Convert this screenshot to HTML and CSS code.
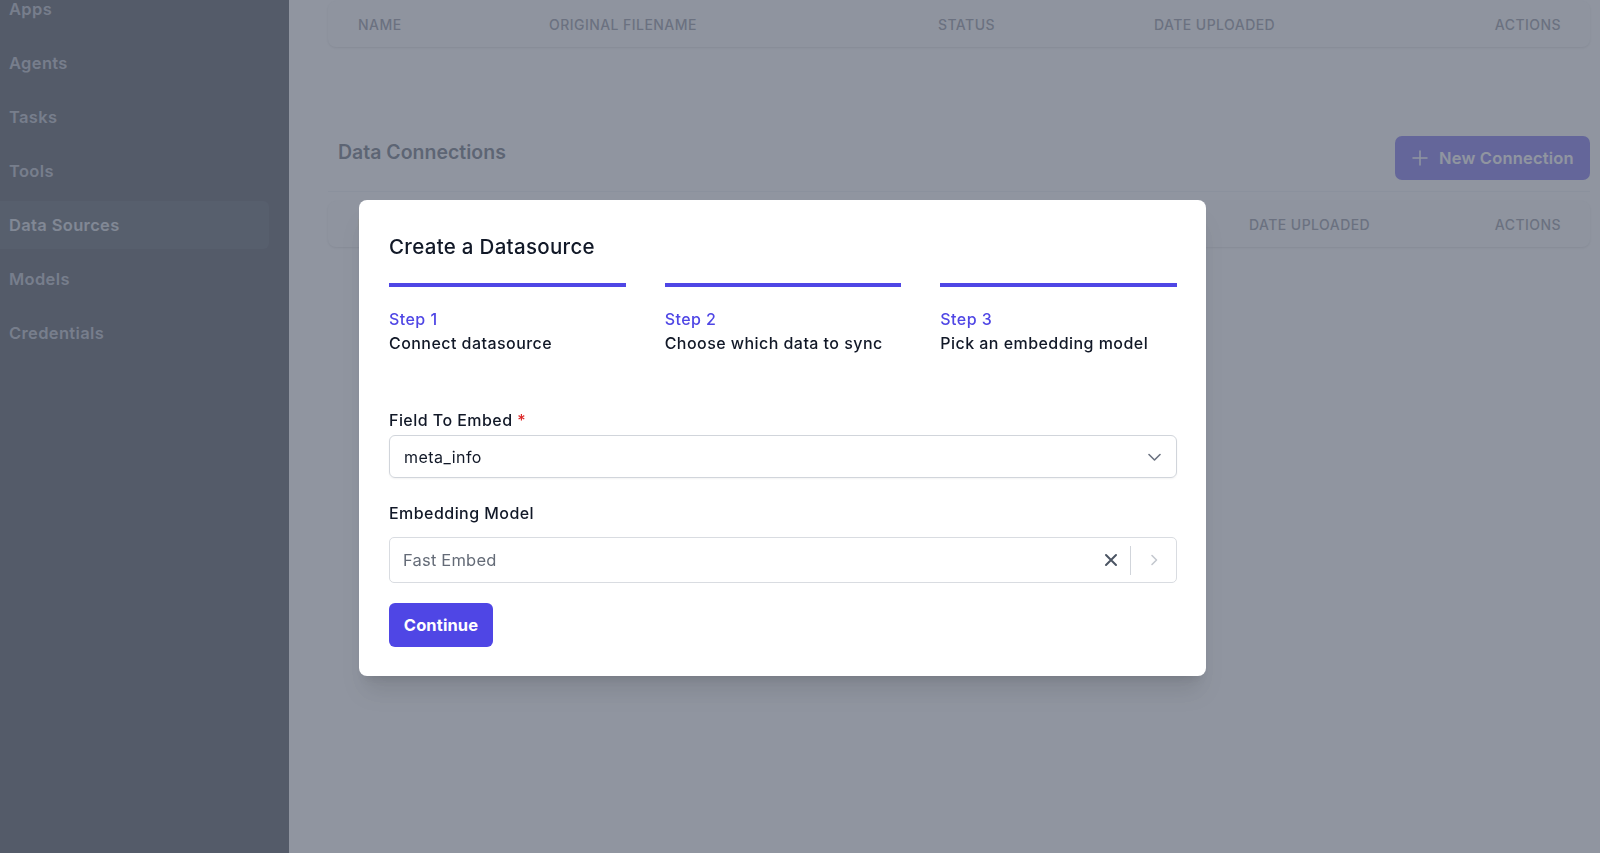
FILE: index.html
```html
<!DOCTYPE html>
<html lang="en">
<head>
	<meta charset="UTF-8">
	<meta name="viewport" content="width=device-width, initial-scale=1.0">
	<title>Data Sources</title>
	<link rel="stylesheet" href="styles.css">
</head>
<body>
	<div class="layout">
		<aside class="sidebar">
			<ul class="nav">
				<li>Apps</li>
				<li>Agents</li>
				<li>Tasks</li>
				<li>Tools</li>
				<li class="active">Data Sources</li>
				<li>Models</li>
				<li>Credentials</li>
			</ul>
		</aside>

		<main class="main">
			<div class="card">
				<div class="thead files">
					<span>Name</span>
					<span>Original Filename</span>
					<span>Status</span>
					<span>Date Uploaded</span>
					<span>Actions</span>
				</div>
			</div>

			<div class="section-head">
				<h2>Data Connections</h2>
				<button type="button" class="btn-new">
					<svg width="16" height="16" viewBox="0 0 16 16" fill="none" stroke="currentColor" stroke-width="1.5" stroke-linecap="round"><path d="M8 1v14M1 8h14"/></svg>
					New Connection
				</button>
			</div>

			<div class="card">
				<div class="thead conns">
					<span>Name</span>
					<span>Source</span>
					<span>Status</span>
					<span>Date Uploaded</span>
					<span>Actions</span>
				</div>
			</div>
		</main>
	</div>

	<div class="backdrop"></div>

	<div class="modal">
		<h3 class="modal-title">Create a Datasource</h3>

		<ol class="steps">
			<li>
				<span class="step-no">Step 1</span>
				<span class="step-name">Connect datasource</span>
			</li>
			<li>
				<span class="step-no">Step 2</span>
				<span class="step-name">Choose which data to sync</span>
			</li>
			<li>
				<span class="step-no">Step 3</span>
				<span class="step-name">Pick an embedding model</span>
			</li>
		</ol>

		<label class="label">Field To Embed <span class="req">*</span></label>
		<div class="select">
			<span>meta_info</span>
			<svg width="13" height="8" viewBox="0 0 13 8" fill="none" stroke="#6b7280" stroke-width="1.6" stroke-linecap="round" stroke-linejoin="round"><path d="M1 1.5l5.5 5.5 5.5-5.5"/></svg>
		</div>

		<label class="label label-gap">Embedding Model</label>
		<div class="combo">
			<span class="combo-value">Fast Embed</span>
			<svg class="clear" width="14" height="14" viewBox="0 0 14 14" fill="none" stroke="#4b5563" stroke-width="2" stroke-linecap="round"><path d="M2 2l10 10M12 2L2 12"/></svg>
			<span class="sep"></span>
			<span class="combo-arrow">
				<svg width="8" height="12" viewBox="0 0 8 12" fill="none" stroke="#c4c8cf" stroke-width="1.6" stroke-linecap="round" stroke-linejoin="round"><path d="M2 1.5l4.5 4.5L2 10.5"/></svg>
			</span>
		</div>

		<button type="button" class="btn-primary">Continue</button>
	</div>
</body>
</html>
```

FILE: styles.css
```css
* {
	box-sizing: border-box;
}
body {
	margin: 0;
	font-family: Inter, "Noto Sans", "Liberation Sans", sans-serif;
	color: #111827;
	background: #fff;
	overflow: hidden;
}
.layout {
	display: flex;
	height: 100vh;
}

/* sidebar */
.sidebar {
	width: 289px;
	flex-shrink: 0;
	background: #111827;
}
.nav {
	list-style: none;
	margin: -15px 0 0;
	padding: 0;
}
.nav li {
	width: 269px;
	height: 48px;
	margin-bottom: 6px;
	padding-left: 9px;
	display: flex;
	align-items: center;
	font-size: 16.5px;
	font-weight: 600;
	letter-spacing: .35px;
	color: #9ca3af;
	border-radius: 0 6px 6px 0;
}
.nav li.active {
	background: #1f2937;
	color: #c4c9d1;
}

/* main */
.main {
	flex: 1;
	padding: 1px 10px 0 39px;
}
.card {
	background: #f9fafb;
	border-radius: 8px;
	box-shadow: 0 1px 3px rgba(0, 0, 0, .12), 0 1px 2px rgba(0, 0, 0, .06);
}
.thead {
	height: 46px;
	display: grid;
	align-items: center;
	padding: 0 29px 0 30px;
	font-size: 14px;
	font-weight: 500;
	letter-spacing: .45px;
	text-transform: uppercase;
	color: #6b7280;
}
.thead span:last-child {
	text-align: right;
}
.files {
	grid-template-columns: 191px 389px 216px 1fr auto;
}
.conns {
	grid-template-columns: 240px 300px 351px 1fr auto;
}
.section-head {
	display: flex;
	justify-content: space-between;
	align-items: flex-start;
	margin-top: 89px;
	padding: 0 0 11px 10px;
	border-bottom: 1px solid #eceef1;
	margin-bottom: 9px;
}
.section-head h2 {
	margin: 2px 0 0;
	font-size: 19.5px;
	line-height: 28px;
	font-weight: 600;
	color: #374151;
}
.btn-new {
	height: 44px;
	width: 195px;
	display: flex;
	align-items: center;
	gap: 11px;
	padding: 0 0 0 17px;
	border: 0;
	border-radius: 7px;
	background: #4f46e5;
	color: #fff;
	font-family: inherit;
	font-size: 16.5px;
	font-weight: 600;
	letter-spacing: .2px;
}

/* modal */
.backdrop {
	position: fixed;
	inset: 0;
	background: rgba(107, 114, 128, .75);
}
.modal {
	position: fixed;
	left: 359px;
	top: 200px;
	width: 847px;
	padding: 33px 29px 29px 30px;
	background: #fff;
	border-radius: 8px;
	letter-spacing: .45px;
	box-shadow: 0 20px 25px -5px rgba(0, 0, 0, .1), 0 8px 10px -6px rgba(0, 0, 0, .1);
}
.modal-title {
	margin: 0;
	font-size: 20.5px;
	line-height: 28px;
	font-weight: 500;
	letter-spacing: .3px;
	color: #111827;
}
.steps {
	list-style: none;
	margin: 22px 0 53px;
	padding: 0;
	display: grid;
	grid-template-columns: repeat(3, 1fr);
	gap: 39px;
}
.steps li {
	border-top: 4px solid #4f46e5;
	padding-top: 20px;
	display: flex;
	flex-direction: column;
}
.step-no,
.step-name {
	font-size: 16px;
	line-height: 24px;
	font-weight: 500;
}
.step-no {
	color: #4f46e5;
}
.label {
	display: block;
	font-size: 16px;
	line-height: 24px;
	font-weight: 500;
	margin-bottom: 3px;
}
.label-gap {
	margin-top: 23px;
	margin-bottom: 12px;
}
.req {
	color: #dc2626;
}
.select {
	height: 43px;
	display: flex;
	align-items: center;
	justify-content: space-between;
	padding: 0 15px 0 14px;
	border: 1px solid #d1d5db;
	border-radius: 6px;
	box-shadow: 0 1px 2px rgba(0, 0, 0, .05);
	font-size: 16px;
}
.combo {
	height: 46px;
	display: flex;
	align-items: center;
	padding-left: 13px;
	border: 1px solid #d9dce1;
	border-radius: 5px;
	font-size: 16.5px;
	letter-spacing: .2px;
}
.combo-value {
	flex: 1;
	color: #646b77;
}
.clear {
	margin-right: 12px;
}
.sep {
	width: 1px;
	height: 29px;
	background: #d1d5db;
}
.combo-arrow {
	width: 45px;
	display: flex;
	justify-content: center;
}
.btn-primary {
	margin-top: 20px;
	width: 104px;
	height: 44px;
	border: 0;
	border-radius: 6px;
	background: #4f46e5;
	color: #fff;
	font-family: inherit;
	font-size: 16.5px;
	font-weight: 700;
	letter-spacing: .1px;
}
```
